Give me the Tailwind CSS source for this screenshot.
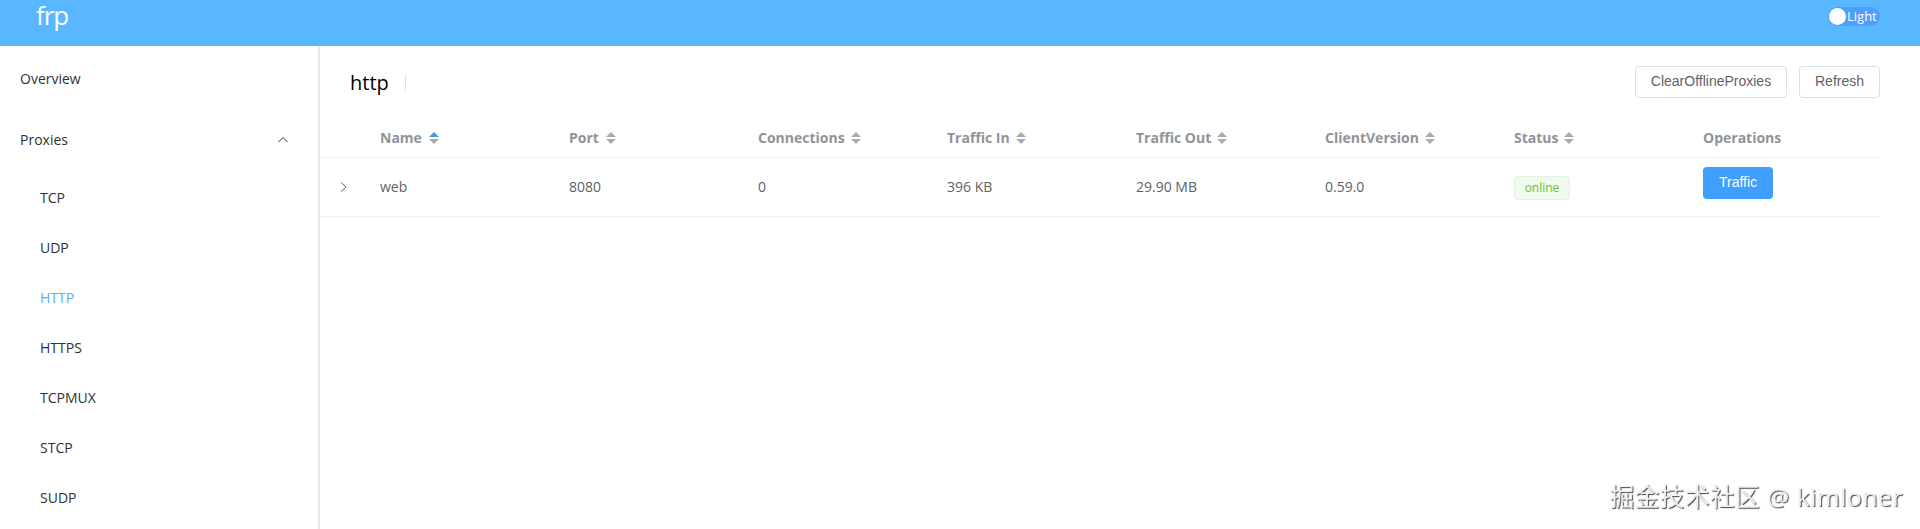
<!DOCTYPE html>
<html lang="en">

<head>
  <meta charset="UTF-8">
  <title>frp</title>
  <script src="https://cdn.jsdelivr.net/npm/@tailwindcss/browser@4"></script>
</head>

<body class="h-[529px] overflow-hidden bg-white font-['Open_Sans','Noto_Sans',sans-serif]">
  <!-- Top bar -->
  <header class="h-[46px] bg-[#58b7ff] flex justify-between pl-[36px] pr-[40px]">
    <div class="text-[26px] leading-[30px] tracking-[-1px] text-white">frp</div>
    <div class="mt-[7px] w-[52px] h-[19px] rounded-full bg-[#4d9fff] flex items-center pl-[1px]">
      <span class="w-[17px] h-[17px] rounded-full bg-white shrink-0"></span>
      <span class="text-[13px] leading-[19px] text-white ml-[1px]">Light</span>
    </div>
  </header>

  <div class="flex h-[483px]">
    <!-- Sidebar -->
    <aside class="w-[320px] shrink-0 border-r-2 border-[#e4e7ed] pt-[5px] text-[14px] text-[#303133]">
      <div class="h-[56px] leading-[56px] pl-[20px]">Overview</div>
      <div class="h-[56px] leading-[56px] pl-[20px] pr-[30px] mt-[5px] flex justify-between items-center">
        <span>Proxies</span>
        <svg width="10" height="10" viewBox="0 0 10 10" fill="none" stroke="#303133" stroke-width="1"><path d="M.5 7 5 2.5 9.5 7" /></svg>
      </div>
      <ul class="mt-[5px]">
        <li class="h-[50px] leading-[50px] pl-[40px]">TCP</li>
        <li class="h-[50px] leading-[50px] pl-[40px]">UDP</li>
        <li class="h-[50px] leading-[50px] pl-[40px] text-[#5ea9f5]">HTTP</li>
        <li class="h-[50px] leading-[50px] pl-[40px]">HTTPS</li>
        <li class="h-[50px] leading-[50px] pl-[40px]">TCPMUX</li>
        <li class="h-[50px] leading-[50px] pl-[40px]">STCP</li>
        <li class="h-[50px] leading-[50px] pl-[40px]">SUDP</li>
      </ul>
    </aside>

    <!-- Main -->
    <main class="flex-1 pr-[40px]">
      <div class="flex items-center justify-between pt-[8px] h-[63px]">
        <div class="flex items-center pl-[30px] pt-[2px]">
          <span class="text-[20px] leading-[32px] text-black">http</span>
          <span class="w-px h-[16px] bg-[#dcdfe6] ml-[16px]"></span>
        </div>
        <div class="flex gap-[12px] font-['Liberation_Sans',sans-serif] text-[14px] text-[#606266]">
          <button class="h-[32px] w-[152px] border border-[#dcdfe6] rounded-[4px] bg-white">ClearOfflineProxies</button>
          <button class="h-[32px] w-[81px] border border-[#dcdfe6] rounded-[4px] bg-white">Refresh</button>
        </div>
      </div>

      <table class="w-full table-fixed text-[14px] text-left">
        <colgroup>
          <col class="w-[48px]">
          <col class="w-[189px]"><col class="w-[189px]"><col class="w-[189px]"><col class="w-[189px]">
          <col class="w-[189px]"><col class="w-[189px]"><col class="w-[189px]"><col>
        </colgroup>
        <thead class="text-[#909399] font-bold">
          <tr class="h-[48px] border-b border-[#ebeef5]">
            <th></th>
            <th class="pl-[12px] pt-[10px]"><span class="flex items-center gap-[7px]">Name
              <svg width="10" height="14" viewBox="0 0 10 14"><path d="M5 1 10 6H0Z" fill="#4f94e0" /><path d="M5 13 0 8H10Z" fill="#a8abb2" /></svg></span></th>
            <th class="pl-[12px] pt-[10px]"><span class="flex items-center gap-[7px]">Port
              <svg width="10" height="14" viewBox="0 0 10 14"><path d="M5 1 10 6H0Z" fill="#a8abb2" /><path d="M5 13 0 8H10Z" fill="#a8abb2" /></svg></span></th>
            <th class="pl-[12px] pt-[10px]"><span class="flex items-center gap-[6px]">Connections
              <svg width="10" height="14" viewBox="0 0 10 14"><path d="M5 1 10 6H0Z" fill="#a8abb2" /><path d="M5 13 0 8H10Z" fill="#a8abb2" /></svg></span></th>
            <th class="pl-[12px] pt-[10px]"><span class="flex items-center gap-[6px]">Traffic In
              <svg width="10" height="14" viewBox="0 0 10 14"><path d="M5 1 10 6H0Z" fill="#a8abb2" /><path d="M5 13 0 8H10Z" fill="#a8abb2" /></svg></span></th>
            <th class="pl-[12px] pt-[10px]"><span class="flex items-center gap-[6px]">Traffic Out
              <svg width="10" height="14" viewBox="0 0 10 14"><path d="M5 1 10 6H0Z" fill="#a8abb2" /><path d="M5 13 0 8H10Z" fill="#a8abb2" /></svg></span></th>
            <th class="pl-[12px] pt-[10px]"><span class="flex items-center gap-[6px]">ClientVersion
              <svg width="10" height="14" viewBox="0 0 10 14"><path d="M5 1 10 6H0Z" fill="#a8abb2" /><path d="M5 13 0 8H10Z" fill="#a8abb2" /></svg></span></th>
            <th class="pl-[12px] pt-[10px]"><span class="flex items-center gap-[6px]">Status
              <svg width="10" height="14" viewBox="0 0 10 14"><path d="M5 1 10 6H0Z" fill="#a8abb2" /><path d="M5 13 0 8H10Z" fill="#a8abb2" /></svg></span></th>
            <th class="pl-[12px] pt-[10px]">Operations</th>
          </tr>
        </thead>
        <tbody class="text-[#606266]">
          <tr class="h-[59px] border-b border-[#ebeef5]">
            <td class="pl-[19px] align-middle">
              <svg width="10" height="12" viewBox="0 0 10 12" fill="none" stroke="#606266" stroke-width="1"><path d="M2 1.5 7 6 2 10.5" /></svg>
            </td>
            <td class="pl-[12px]">web</td>
            <td class="pl-[12px]">8080</td>
            <td class="pl-[12px]">0</td>
            <td class="pl-[12px]">396 KB</td>
            <td class="pl-[12px]">29.90 MB</td>
            <td class="pl-[12px]">0.59.0</td>
            <td class="pl-[12px]">
              <span class="inline-flex items-center justify-center w-[56px] h-[24px] mt-[2px] rounded-[4px] border border-[#e1f3d8] bg-[#f0f9eb] text-[12px] text-[#67c23a]">online</span>
            </td>
            <td class="pl-[12px] align-top pt-[9px]">
              <button class="block w-[70px] h-[32px] rounded-[4px] bg-[#409eff] text-white text-[14px] font-['Liberation_Sans',sans-serif]">Traffic</button>
            </td>
          </tr>
        </tbody>
      </table>
    </main>
  </div>

  <!-- Watermark -->
  <div class="fixed right-[17px] bottom-[16px] text-[24.5px] tracking-[0.6px] leading-[32px] text-[#f0f0f0] [text-shadow:1px_1px_1px_#444] font-['Open_Sans','Noto_Sans_CJK_SC',sans-serif]">掘金技术社区 @ kimloner</div>
</body>

</html>
